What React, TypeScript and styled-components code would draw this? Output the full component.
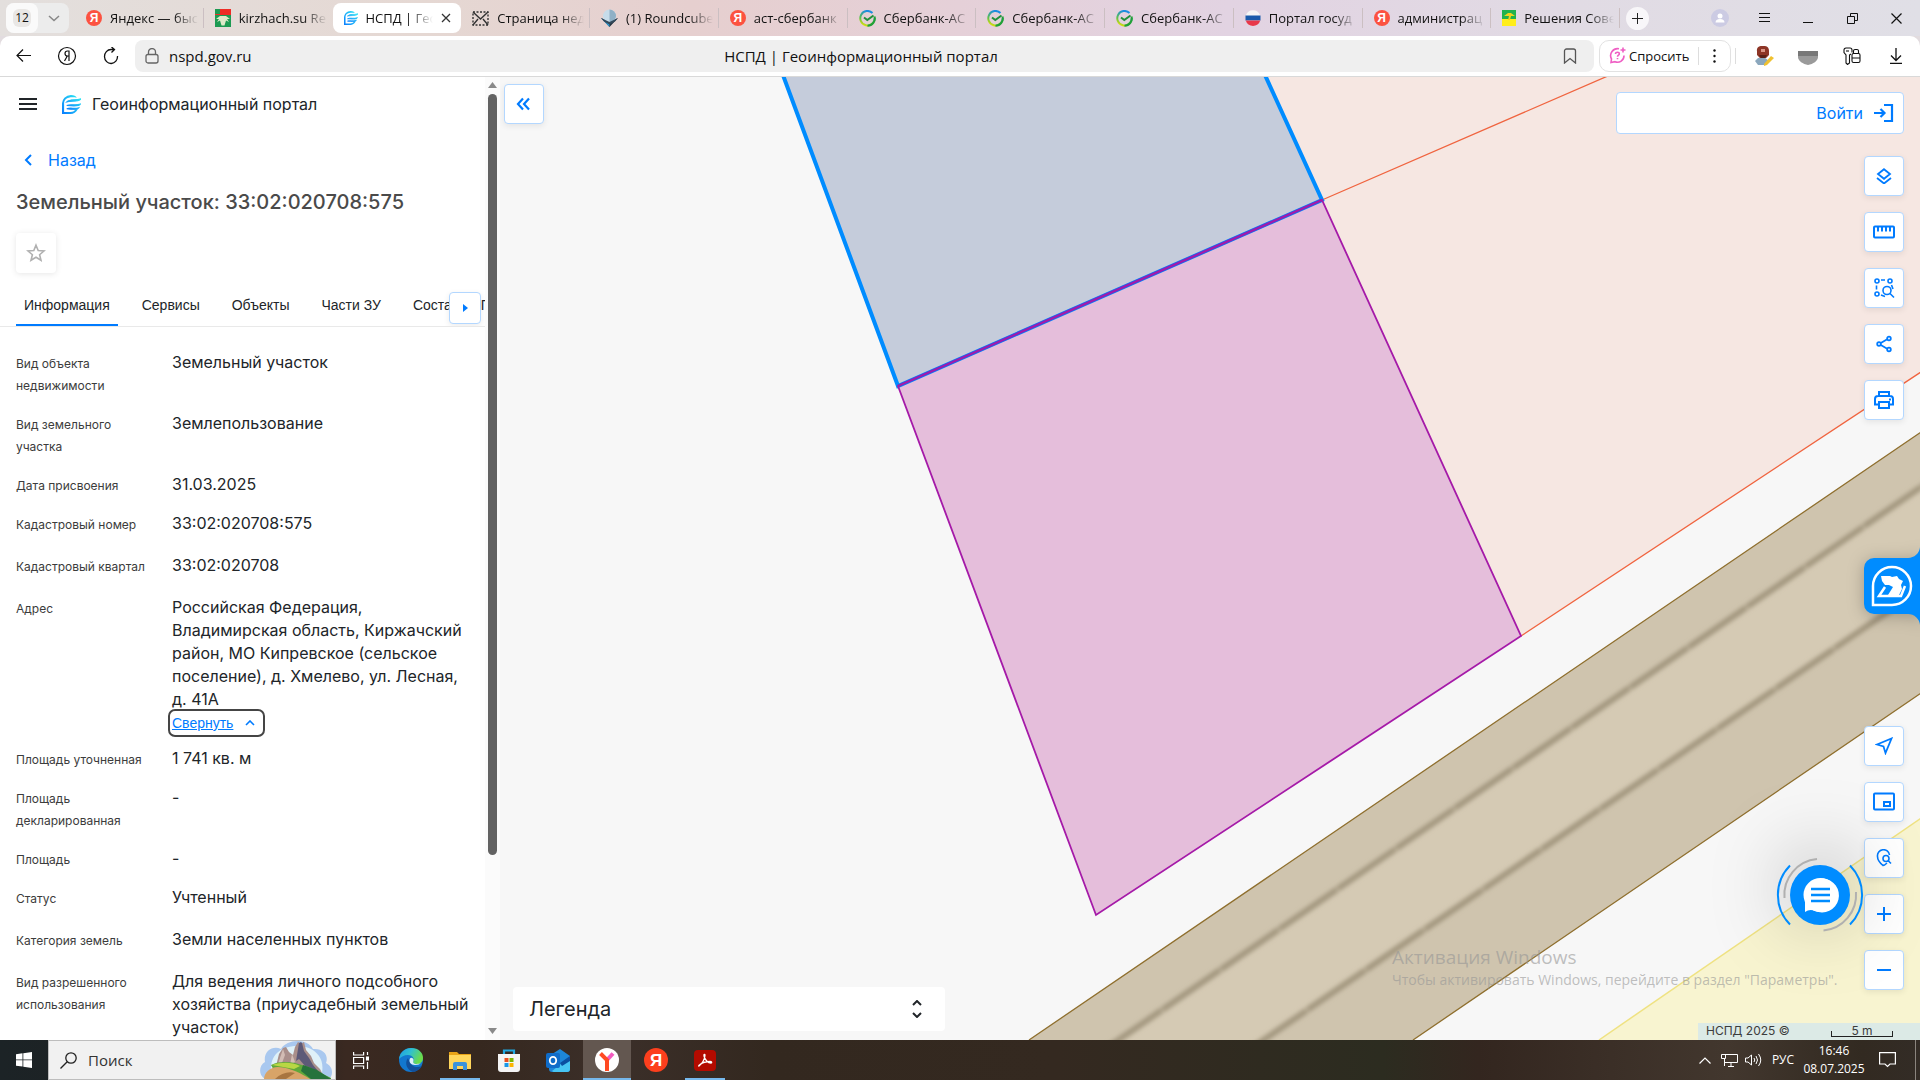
import React from "react";
import styled, { createGlobalStyle, css } from "styled-components";

const BLUE = "#007bff";
const UI = `"Open Sans", "Noto Sans", sans-serif`;

const Global = createGlobalStyle`
  *, *::before, *::after { box-sizing: border-box; }
  body { margin: 0; font-family: Inter, "Liberation Sans", sans-serif; color: #212529; }
  button { border: 0; padding: 0; background: none; font: inherit; color: inherit; cursor: pointer; }
  input { border: 0; padding: 0; background: none; font: inherit; color: inherit; outline: 0; min-width: 0; }
  svg { display: block; flex: none; }
`;

const Page = styled.div`
  height: 100vh;
  display: flex;
  flex-direction: column;
  overflow: hidden;
  background: #fff;
`;

/* ---------- browser chrome ---------- */

const TabStrip = styled.header`
  display: flex;
  align-items: center;
  height: 36px;
  padding: 0 2px 0 6px;
  font: 13px/18px ${UI};
  color: #111;
  background: linear-gradient(90deg, #e3dfdd 0%, #e5d8d3 22%, #e6cfcf 36%, #e5d0d8 50%, #e2d3e2 64%, #e1dbe4 82%, #e0dfe6 100%);
`;

const TabCounter = styled.div`
  display: flex;
  align-items: center;
  width: 63px;
  height: 30px;
  margin-right: 6px;
  border-radius: 8px;
  background: #ececec;
`;

const CountButton = styled.button`
  width: 32px;
  height: 30px;
  display: grid;
  place-items: center;
  border-radius: 8px;
  background: #fafafa;
  span { width: 18px; height: 18px; border-radius: 6px; background: #e9e7e5; font-size: 12px; color: #111; }
`;

const ChevronButton = styled.button`
  flex: 1;
  display: grid;
  place-items: center;
`;

const Tabs = styled.nav`
  display: flex;
  flex: 0 1 1545px;
  min-width: 0;
`;

const BrowserTab = styled.button<{ $active?: boolean; $line?: boolean }>`
  flex: 1 1 0;
  min-width: 0;
  height: 30px;
  display: flex;
  align-items: center;
  gap: 8px;
  padding: 0 6px 0 11px;
  border-radius: ${p => (p.$active ? "8px" : "0")};
  background: ${p => (p.$active ? "#fff" : p.$line ? "linear-gradient(#cbbfc2, #cbbfc2) right center / 1px 20px no-repeat" : "none")};
  text-align: left;
  > svg:last-child { margin-right: 4px; }
`;

const TabTitle = styled.span`
  flex: 1;
  min-width: 0;
  overflow: hidden;
  white-space: nowrap;
  mask-image: linear-gradient(90deg, #000 calc(100% - 24px), transparent);
`;

const YaBadge = styled.span<{ $size: number; $bg?: string }>`
  flex: none;
  width: ${p => p.$size}px;
  height: ${p => p.$size}px;
  border-radius: 50%;
  display: grid;
  place-items: center;
  background: ${p => p.$bg ?? "#fc5240"};
  color: #fff;
  font: 700 ${p => (p.$size > 20 ? 17 : 12)}px/1 "Liberation Sans", sans-serif;
`;

const NewTab = styled.button`
  width: 23px;
  height: 23px;
  margin-left: 6px;
  display: grid;
  place-items: center;
  border-radius: 50%;
  background: #f8f6f9;
`;

const WindowControls = styled.div`
  display: flex;
  margin-left: auto;
  button { width: 44px; height: 36px; display: grid; place-items: center; }
`;

const ToolbarBack = styled.div`
  background: #e2dcdf;
`;

const Toolbar = styled.div`
  height: 41px;
  display: flex;
  align-items: center;
  padding: 0 2px 1px 1px;
  border-bottom: 1px solid #d9d9d9;
  border-radius: 10px 10px 0 0;
  background: #fff;
  color: #111;
  font: 15px/20px ${UI};
`;

const ToolButton = styled.button`
  width: 44px;
  height: 32px;
  display: grid;
  place-items: center;
`;

const Omnibox = styled.div`
  flex: 1;
  height: 32px;
  margin-left: 2px;
  padding: 0 17px 0 10px;
  display: grid;
  grid-template-columns: 1fr auto 1fr;
  align-items: center;
  border-radius: 8px;
  background: #efefef;
  > svg:last-child { justify-self: end; }
`;

const Address = styled.label`
  display: flex;
  align-items: center;
  gap: 10px;
`;

const AskBox = styled.div`
  width: 132px;
  height: 32px;
  margin: 0 4px 0 5px;
  display: flex;
  align-items: center;
  border: 1px solid #e2e2e2;
  border-radius: 10px;
  font-size: 13px;
`;

const AskButton = styled.button`
  width: 99px;
  height: 18px;
  padding-left: 9px;
  display: flex;
  align-items: center;
  gap: 3px;
  border-right: 1px solid #ddd;
`;

const MoreButton = styled.button`
  flex: 1;
  display: grid;
  place-items: center;
`;

const ToolDivider = styled.i`
  width: 1px;
  height: 16px;
  margin-right: 6px;
  background: #ddd;
`;

/* ---------- sidebar ---------- */

const Main = styled.main`
  flex: 1;
  min-height: 0;
  display: flex;
`;

const Sidebar = styled.aside`
  flex: none;
  width: 500px;
  display: flex;
  overflow: hidden;
  background: #fff;
`;

const Panel = styled.div`
  flex: 1;
  min-width: 0;
  overflow: hidden;
`;

const PortalHead = styled.div`
  height: 54px;
  display: flex;
  align-items: center;
  padding-left: 19px;
  font-size: 16px;
  a { display: flex; align-items: center; gap: 11px; margin-left: 25px; color: inherit; text-decoration: none; }
`;

const Back = styled.a`
  display: flex;
  align-items: center;
  gap: 12px;
  margin: 17px 0 0 20px;
  height: 24px;
  color: ${BLUE};
  font-size: 16px;
  text-decoration: none;
`;

const Heading = styled.h1`
  margin: 17px 16px 18px;
  color: #4a4a4a;
  font-size: 20px;
  line-height: 26px;
  font-weight: 500;
`;

const StarButton = styled.button`
  width: 40px;
  height: 40px;
  margin: 0 16px 16px;
  display: grid;
  place-items: center;
  border-radius: 4px;
  box-shadow: 0 1px 6px rgba(0, 0, 0, 0.1);
`;

const TabBar = styled.div`
  position: relative;
  display: flex;
  gap: 16px;
  height: 38px;
  padding-left: 16px;
  border-bottom: 1px solid #e9e9e9;
  overflow: hidden;
`;

const InfoTab = styled.button<{ $active?: boolean }>`
  flex: none;
  height: 37px;
  padding: 0 8px 3px;
  font-family: "Liberation Sans", sans-serif;
  font-size: 14px;
  white-space: nowrap;
  border-bottom: 2px solid ${p => (p.$active ? BLUE : "transparent")};
`;

const framed = css`
  display: grid;
  place-items: center;
  border: 1px solid #b3d7ff;
  border-radius: 4px;
  background: #fff;
  color: ${BLUE};
  box-shadow: 0 2px 6px rgba(0, 0, 0, 0.08);
`;

const TabScroll = styled.button`
  ${framed}
  position: absolute;
  right: 4px;
  top: 3px;
  width: 32px;
  height: 32px;
`;

const Facts = styled.dl`
  margin: 0;
  padding: 24px 12px 0 16px;
`;

const Fact = styled.div<{ $gap: number }>`
  display: grid;
  grid-template-columns: 140px 1fr;
  column-gap: 16px;
  align-items: baseline;
  margin-bottom: ${p => p.$gap}px;
  dt { font-size: 12px; line-height: 22px; color: #3c3c3c; }
  dd { margin: 0; font-size: 16px; line-height: 23px; }
`;

const Collapse = styled.button`
  display: flex;
  align-items: center;
  gap: 12px;
  height: 28px;
  margin: -2px 0 -5px -4px;
  padding: 0 8px 0 2px;
  border: 2px solid #454545;
  border-radius: 7px;
  color: ${BLUE};
  font-family: "Liberation Sans", sans-serif;
  font-size: 14px;
  span { text-decoration: underline; }
`;

const ScrollTrack = styled.div`
  width: 15px;
  display: flex;
  flex-direction: column;
  align-items: center;
  gap: 6px;
  padding: 5px 0 6px;
  background: #fbfbfb;
`;

const ScrollThumb = styled.div`
  flex: 761;
  width: 9px;
  border-radius: 5px;
  background: #636363;
`;

const ScrollRest = styled.div`
  flex: 161;
`;

/* ---------- map ---------- */

const MapArea = styled.section`
  position: relative;
  flex: 1;
  min-width: 0;
  overflow: hidden;
  background: #f7f7f7;
`;

const MapCanvas = styled.svg`
  position: absolute;
  inset: 0;
  width: 100%;
  height: 100%;
`;

const MapButton = styled.button`
  ${framed}
  width: 40px;
  height: 40px;
`;

const CornerLeft = styled.div`
  position: absolute;
  left: 4px;
  top: 7px;
`;

const LoginBar = styled.div`
  position: absolute;
  right: 16px;
  top: 15px;
  width: 288px;
  height: 42px;
  display: flex;
  justify-content: flex-end;
  align-items: center;
  padding-right: 9px;
  border: 1px solid #b3d7ff;
  border-radius: 4px;
  background: #fff;
  a { display: flex; align-items: center; gap: 9px; color: ${BLUE}; font-size: 16px; text-decoration: none; }
`;

const Stack = styled.div<{ $top?: number; $bottom?: number }>`
  position: absolute;
  right: 16px;
  ${p => (p.$top !== undefined ? `top: ${p.$top}px;` : `bottom: ${p.$bottom}px;`)}
  display: flex;
  flex-direction: column;
  gap: 16px;
`;

const Support = styled.button`
  position: absolute;
  right: 0;
  top: 468px;
  filter: drop-shadow(0 2px 8px rgba(0, 0, 0, 0.25));
`;

const ChatButton = styled.button`
  position: absolute;
  right: 70px;
  bottom: 115px;
  width: 60px;
  height: 60px;
  border-radius: 50%;
  background: #008cff;
  box-shadow: 0 -8px 80px rgba(0, 0, 0, 0.36);
  svg { margin: -15px; }
`;

const Legend = styled.button`
  position: absolute;
  left: 13px;
  bottom: 9px;
  width: 432px;
  height: 44px;
  display: flex;
  justify-content: space-between;
  align-items: center;
  padding: 0 23px 0 16px;
  border-radius: 4px;
  background: #fff;
  font-size: 20px;
`;

const Attribution = styled.footer`
  position: absolute;
  right: 0;
  bottom: 0;
  width: 222px;
  height: 17px;
  display: flex;
  justify-content: space-between;
  padding: 0 27px 0 8px;
  background: #dceae6;
  color: #3c3c3c;
  font-size: 12px;
  line-height: 16px;
`;

const Scale = styled.span`
  width: 62px;
  height: 14px;
  text-align: center;
  background:
    linear-gradient(#222, #222) left bottom / 1px 6px no-repeat,
    linear-gradient(#222, #222) right bottom / 1px 6px no-repeat,
    linear-gradient(#222, #222) bottom / 100% 1px no-repeat;
`;

const Watermark = styled.div`
  position: absolute;
  right: 73px;
  bottom: 50px;
  width: 455px;
  color: rgba(150, 150, 150, 0.6);
  font: 14px/20px ${UI};
  white-space: nowrap;
  pointer-events: none;
  strong { display: block; font-weight: 400; font-size: 19px; line-height: 26px; }
`;

/* ---------- taskbar ---------- */

const Taskbar = styled.footer`
  flex: none;
  height: 40px;
  display: flex;
  align-items: stretch;
  color: #fff;
  font: 12px/18px ${UI};
  background: linear-gradient(90deg, #1c2326 0%, #1e2020 14%, #3a2921 18%, #36281f 25%, #3b2f29 32%, #33281f 40%, #342920 55%, #2c2c20 72%, #33261f 77%, #42372e 90%, #322a21 97%, #332c26 100%);
`;

const StartButton = styled.button`
  width: 48px;
  display: grid;
  place-items: center;
`;

const SearchBox = styled.label`
  width: 288px;
  display: flex;
  align-items: center;
  gap: 11px;
  padding-left: 11px;
  border: 1px solid #bdbdbd;
  background: #f1f1f1;
  color: #333;
  font-size: 15px;
  input { flex: 1; }
  input::placeholder { color: #333; opacity: 1; }
`;

const Apps = styled.div`
  display: flex;
  gap: 1px;
  > :first-child { width: 50px; }
`;

const AppButton = styled.button<{ $open?: boolean; $active?: boolean }>`
  width: 48px;
  display: grid;
  place-items: center;
  background:
    ${p => (p.$open || p.$active ? `linear-gradient(#76b9ed, #76b9ed) center bottom / ${p.$active ? 48 : 40}px 2px no-repeat,` : "")}
    ${p => (p.$active ? "#635750" : "transparent")};
`;

const Tray = styled.div`
  margin-left: auto;
  display: flex;
  align-items: center;
  text-align: center;
`;

const TrayButton = styled.button<{ $w: number }>`
  width: ${p => p.$w}px;
  height: 40px;
  display: grid;
  place-items: center;
`;

const ShowDesktop = styled.button`
  width: 5px;
  height: 40px;
  margin-left: 8px;
  border-left: 1px solid #8a847e;
`;

/* ---------- icons ---------- */

type IconProps = { size?: number; w?: number; box?: number; children: React.ReactNode };
const Icon = ({ size = 24, w = 2, box = 24, children }: IconProps) => (
  <svg width={size} height={size} viewBox={`0 0 ${box} ${box}`} fill="none" stroke="currentColor" strokeWidth={w} aria-hidden="true">
    {children}
  </svg>
);

const Arms = () => (
  <svg width="16" height="19" viewBox="0 0 16 19">
    <path d="M0 0h16v18H0z" fill="#1d9a52" />
    <path d="M0 0h16v6H0z" fill="#ee2c25" />
    <path d="M0 0h5v5H0z" fill="#1d9a52" />
    <path d="M1 10l4-3 3 0 3 0 4 3-3 0 2 3-3-1.500-1.500 5h-3L5 11.500 2 13l2-3z" fill="#dfe9c9" />
  </svg>
);

const Portal = ({ size }: { size: number }) => (
  <svg width={size} height={size} viewBox="0 0 18 18">
    <defs>
      <linearGradient id="pg" x1="0" y1="1" x2="1" y2="0">
        <stop offset="0" stopColor="#0a7bff" />
        <stop offset="1" stopColor="#2be8f2" />
      </linearGradient>
    </defs>
    <path d="M0 18V9a8.500 8.500 0 0 1 8.500-9c3 0 4.500 1 5.500 2.500-4-.500-8-.500-10.500 1.500C2 5.500 2 7 2 9v7h6c2.500 0 4-1 5-2.500h2C13.500 16.500 11 18 8 18z" fill="url(#pg)" />
    <path d="M4.500 6.500C8 3 12 5.500 18 3.500 17 6.500 9 5.500 4.500 6.500zM4.500 10c4-2 8 .500 13-1.500-1.500 3-8 1.500-13 1.500zM4.500 13c4-1.500 7 .500 11.500-1-1.500 2.500-7 1.500-11.500 1z" fill="url(#pg)" stroke="url(#pg)" />
  </svg>
);

const Envelope = () => (
  <svg width="17" height="15" viewBox="0 0 17 15" fill="none" stroke="#333" strokeWidth="1.400">
    <path d="M1 1h15v13H1z" strokeDasharray="2 1.500" />
    <path d="M1 1l7.500 7L16 1M1 14l5-6M16 14l-5-6" />
  </svg>
);

const Roundcube = () => (
  <svg width="17" height="18" viewBox="0 0 17 18">
    <path d="M0 9l8.500 4L17 9l-8.500 9z" fill="#22323f" />
    <path d="M0 9l8.500 4.500V18z" fill="#2d9ad4" />
    <circle cx="8.500" cy="7" r="6.500" fill="#c6dcea" />
    <path d="M8.500.500a6.500 6.500 0 0 1 0 13z" fill="#8fb0c6" />
    <path d="M0 9l8.500 4L17 9l-3 3.500-5.500 3-5.500-3z" fill="#33495a" />
  </svg>
);

const Sber = () => (
  <svg width="17" height="17" viewBox="0 0 17 17" fill="none">
    <defs>
      <linearGradient id="sb" x1="0" y1="1" x2="0.400" y2="0">
        <stop offset="0" stopColor="#f3e500" />
        <stop offset="0.450" stopColor="#5fc24a" />
        <stop offset="1" stopColor="#1b8de0" />
      </linearGradient>
    </defs>
    <path d="M13.500 3A7.200 7.200 0 1 0 15.700 8" stroke="url(#sb)" strokeWidth="2" />
    <path d="M15.500 6.500a7.200 7.200 0 0 1-7 9.200" stroke="#21a038" strokeWidth="2" />
    <path d="M5 7.500l3.300 2.500L14.500 5.500" stroke="#21903a" strokeWidth="2" />
  </svg>
);

const Gos = () => (
  <svg width="16" height="16" viewBox="0 0 16 16">
    <path d="M1 5a7.500 7.500 0 0 1 14 0v6a8 8 0 0 1-7 5 8 8 0 0 1-7-5z" fill="#f5f5f5" />
    <path d="M.5 5.500h15v5H.500z" fill="#1a5aab" />
    <path d="M.7 10.500h14.600A8 8 0 0 1 8 16a8 8 0 0 1-7.300-5.500z" fill="#e8384a" />
  </svg>
);

const Council = () => (
  <svg width="14" height="16" viewBox="0 0 14 16">
    <path d="M0 0h14v9H0z" fill="#20b24d" />
    <path d="M0 9h14v7H0z" fill="#ffee1a" />
    <path d="M2 6l4-3 3 0 4 3-4 0-1 4H6l1-4z" fill="#f1d21d" />
  </svg>
);

const Ya = () => <YaBadge $size={16}>Я</YaBadge>;

type TabInfo = { icon: React.ReactNode; title: string; active?: boolean; line?: boolean };
const TABS: TabInfo[] = [
  { icon: <Ya />, title: "Яндекс — быс", line: true },
  { icon: <Arms />, title: "kirzhach.su Re" },
  { icon: <Portal size={14} />, title: "НСПД | Гео", active: true },
  { icon: <Envelope />, title: "Страница нед", line: true },
  { icon: <Roundcube />, title: "(1) Roundcube", line: true },
  { icon: <Ya />, title: "аст-сбербанк", line: true },
  { icon: <Sber />, title: "Сбербанк-АС", line: true },
  { icon: <Sber />, title: "Сбербанк-АС", line: true },
  { icon: <Sber />, title: "Сбербанк-АС", line: true },
  { icon: <Gos />, title: "Портал госуд", line: true },
  { icon: <Ya />, title: "администрац", line: true },
  { icon: <Council />, title: "Решения Сове", line: true },
];

type FactInfo = { label: string; value: string; gap: number; collapsible?: boolean };
const FACTS: FactInfo[] = [
  { label: "Вид объекта недвижимости", value: "Земельный участок", gap: 15 },
  { label: "Вид земельного участка", value: "Землепользование", gap: 15 },
  { label: "Дата присвоения", value: "31.03.2025", gap: 15 },
  { label: "Кадастровый номер", value: "33:02:020708:575", gap: 18 },
  { label: "Кадастровый квартал", value: "33:02:020708", gap: 18 },
  {
    label: "Адрес",
    value: "Российская Федерация, Владимирская область, Киржачский район, МО Кипревское (сельское поселение), д. Хмелево, ул. Лесная, д. 41А",
    gap: 15,
    collapsible: true,
  },
  { label: "Площадь уточненная", value: "1 741 кв. м", gap: 15 },
  { label: "Площадь декларированная", value: "-", gap: 15 },
  { label: "Площадь", value: "-", gap: 15 },
  { label: "Статус", value: "Учтенный", gap: 18 },
  { label: "Категория земель", value: "Земли населенных пунктов", gap: 18 },
  { label: "Вид разрешенного использования", value: "Для ведения личного подсобного хозяйства (приусадебный земельный участок)", gap: 18 },
];

const BrowserChrome = () => (
  <>
    <TabStrip>
      <TabCounter>
        <CountButton><span>12</span></CountButton>
        <ChevronButton aria-label="Список вкладок">
          <svg width="12" height="7" viewBox="0 0 12 7" fill="none" stroke="#888" strokeWidth="1.500"><path d="M1 1l5 4.500L11 1" /></svg>
        </ChevronButton>
      </TabCounter>
      <Tabs>
        {TABS.map((t, i) => (
          <BrowserTab key={i} $active={t.active} $line={t.line}>
            {t.icon}
            <TabTitle>{t.title}</TabTitle>
            {t.active && <svg width="10" height="10" viewBox="0 0 10 10" stroke="#333" strokeWidth="1.300"><path d="M1 1l8 8M9 1L1 9" /></svg>}
          </BrowserTab>
        ))}
      </Tabs>
      <NewTab aria-label="Новая вкладка">
        <svg width="11" height="11" viewBox="0 0 11 11" stroke="#222"><path d="M5.500 0v11M0 5.500h11" /></svg>
      </NewTab>
      <WindowControls>
        <button aria-label="Профиль">
          <svg width="18" height="18" viewBox="0 0 18 18"><circle cx="9" cy="9" r="9" fill="#cccbe3" /><circle cx="9" cy="7" r="2.500" fill="#fff" /><path d="M4.500 13.500a4.500 3.500 0 0 1 9 0z" fill="#fff" /></svg>
        </button>
        <button aria-label="Меню"><svg width="11" height="10" viewBox="0 0 11 10" stroke="#111"><path d="M0 .5h11M0 4.500h11M0 8.500h11" /></svg></button>
        <button aria-label="Свернуть окно"><svg width="10" height="10" viewBox="0 0 10 10" stroke="#111"><path d="M0 9.500h10" /></svg></button>
        <button aria-label="Восстановить"><svg width="11" height="11" viewBox="0 0 11 11" fill="none" stroke="#111"><path d="M.5 3.500h7v7h-7zM3.500 3V.500h7v7H8" /></svg></button>
        <button aria-label="Закрыть"><svg width="11" height="11" viewBox="0 0 11 11" stroke="#111" strokeWidth="1.200"><path d="M.5.500l10 10M10.500.500l-10 10" /></svg></button>
      </WindowControls>
    </TabStrip>
    <ToolbarBack>
      <Toolbar>
        <ToolButton aria-label="Назад"><svg width="15" height="13" viewBox="0 0 15 13" fill="none" stroke="#111" strokeWidth="1.200"><path d="M15 6.500H1M7 .500l-6 6 6 6" /></svg></ToolButton>
        <ToolButton aria-label="Яндекс">
          <svg width="20" height="20" viewBox="0 0 20 20" fill="none" stroke="#111" strokeWidth="1.200"><circle cx="10" cy="10" r="8.500" /><path d="M12 15V5h-1.500C8.800 5 8 6 8 7.500S9 10 10.500 10H12M10.300 10L7.500 15" /></svg>
        </ToolButton>
        <ToolButton aria-label="Обновить"><svg width="16" height="18" viewBox="0 0 16 18" fill="none" stroke="#111" strokeWidth="1.300"><path d="M14.500 9a6.500 7 0 1 1-6.500-6.500h3M8.500 0l3 2.500-3 3" /></svg></ToolButton>
        <Omnibox>
          <Address>
            <svg width="14" height="16" viewBox="0 0 14 16" fill="none" stroke="#666" strokeWidth="1.300"><rect x="1" y="6.500" width="12" height="8.500" rx="2" /><path d="M3.500 6.500V4a3.500 3.500 0 0 1 7 0v2.500" /></svg>
            <input aria-label="Адресная строка" defaultValue="nspd.gov.ru" />
          </Address>
          <span>НСПД | Геоинформационный портал</span>
          <svg width="14" height="16" viewBox="0 0 14 16" fill="none" stroke="#555" strokeWidth="1.300"><path d="M1.500 15V3a2 2 0 0 1 2-2h7a2 2 0 0 1 2 2v12L7 10.500z" /></svg>
        </Omnibox>
        <AskBox>
          <AskButton>
            <svg width="17" height="17" viewBox="0 0 17 17" fill="none" stroke="#ef5fc4" strokeWidth="1.600">
              <path d="M10 1.800A7 7 0 0 0 2.500 12L2 15.500l4-.800a6.500 6.500 0 0 0 9-6.200" />
              <path d="M6.500 7c0-2.500 4-2.200 3.800 0-.1 1.300-1.800 1.200-1.800 2.800M8.500 11v1.300M14 .500v5M11.500 3h5" />
            </svg>
            Спросить
          </AskButton>
          <MoreButton aria-label="Ещё"><svg width="3" height="14" viewBox="0 0 3 14" fill="#111"><circle cx="1.500" cy="1.500" r="1.200" /><circle cx="1.500" cy="7" r="1.200" /><circle cx="1.500" cy="12.500" r="1.200" /></svg></MoreButton>
        </AskBox>
        <ToolDivider />
        <ToolButton aria-label="Расширение">
          <svg width="20" height="20" viewBox="0 0 20 20">
            <path d="M1 15l3-3 6-1 5 4-3 4-8 0z" fill="#8ba7bd" />
            <path d="M3 5a4 4 0 0 1 4-5h4a5 5 0 0 1 4 5v4l-3 3H6L3 9z" fill="#8d3526" />
            <path d="M5 9h8l-2 3H7z" fill="#5a2118" /><path d="M7 3h4v3H7z" fill="#d99485" />
            <path d="M10 18l7-8 3 2-7 7-3 1z" fill="#f0c12f" />
          </svg>
        </ToolButton>
        <ToolButton aria-label="Защита">
          <svg width="20" height="19" viewBox="0 0 20 19"><path d="M0 5h20v6c0 4-5 7-10 8C5 18 0 15 0 11z" fill="#9a9a9a" /><path d="M0 5h20v5H0z" fill="#787878" /></svg>
        </ToolButton>
        <ToolButton aria-label="Пароли">
          <svg width="18" height="18" viewBox="0 0 18 18" fill="none" stroke="#111" strokeWidth="1.100"><path d="M9 5.500V3a2 2 0 0 0-2-2H3a2 2 0 0 0-2 2v2.500L3 8v8l1.500 1.500L6.500 16V8L8 7" /><path d="M3 4h3" /><rect x="9" y="6.500" width="8" height="9" rx="1.500" /><path d="M10.500 6.500V4A1.500 1.500 0 0 1 12 2.500h2A1.500 1.500 0 0 1 15.500 4v2.500M9 11h8" /></svg>
        </ToolButton>
        <ToolButton aria-label="Загрузки"><svg width="14" height="16" viewBox="0 0 14 16" fill="none" stroke="#111" strokeWidth="1.300"><path d="M7 0v12M2 7.500l5 5 5-5M1 15.300h12" /></svg></ToolButton>
      </Toolbar>
    </ToolbarBack>
  </>
);

const ParcelPanel = () => (
  <Sidebar>
    <Panel>
      <PortalHead>
        <button aria-label="Меню"><svg width="18" height="12" viewBox="0 0 18 12" fill="#212529"><path d="M0 0h18v2H0zM0 5h18v2H0zM0 10h18v2H0z" /></svg></button>
        <a href="#home"><Portal size={19} />Геоинформационный портал</a>
      </PortalHead>
      <Back href="#back">
        <svg width="16" height="16" viewBox="0 0 16 16" fill="none" stroke="currentColor" strokeWidth="2"><path d="M11 3L6 8l5 5" /></svg>
        Назад
      </Back>
      <Heading>Земельный участок: 33:02:020708:575</Heading>
      <StarButton aria-label="В избранное">
        <svg width="20" height="20" viewBox="0 0 20 20" fill="none" stroke="#b0b0b0" strokeWidth="1.600"><path d="M10 2.200l2.200 5.300 5.800.500-4.400 3.700 1.400 5.600-5-3-5 3 1.400-5.600L2 8l5.800-.500z" /></svg>
      </StarButton>
      <TabBar>
        <InfoTab $active>Информация</InfoTab>
        <InfoTab>Сервисы</InfoTab>
        <InfoTab>Объекты</InfoTab>
        <InfoTab>Части ЗУ</InfoTab>
        <InfoTab>Состав ЕЗП</InfoTab>
        <TabScroll aria-label="Дальше"><svg width="5" height="8" viewBox="0 0 5 8" fill={BLUE}><path d="M0 0l5 4-5 4z" /></svg></TabScroll>
      </TabBar>
      <Facts>
        {FACTS.map(f => (
          <Fact key={f.label} $gap={f.gap}>
            <dt>{f.label}</dt>
            <dd>
              {f.value}
              {f.collapsible && (
                <Collapse>
                  <span>Свернуть</span>
                  <svg width="10" height="6" viewBox="0 0 10 6" fill="none" stroke="currentColor" strokeWidth="1.600"><path d="M1 5l4-4 4 4" /></svg>
                </Collapse>
              )}
            </dd>
          </Fact>
        ))}
      </Facts>
    </Panel>
    <ScrollTrack>
      <svg width="9" height="6" viewBox="0 0 9 6" fill="#8a8a8a"><path d="M0 6l4.500-6L9 6z" /></svg>
      <ScrollThumb />
      <ScrollRest />
      <svg width="9" height="6" viewBox="0 0 9 6" fill="#8a8a8a"><path d="M0 0l4.500 6L9 0z" /></svg>
    </ScrollTrack>
  </Sidebar>
);

const MapView = () => (
  <MapArea>
    <MapCanvas viewBox="500 77 1420 963" preserveAspectRatio="xMaxYMin slice">
      <defs><filter id="soft" x="-5%" y="-5%" width="110%" height="110%"><feGaussianBlur stdDeviation="2" /></filter></defs>
      <path d="M1250 40H1930V366L1521 636 1322 200z" fill="#f6e7e2" />
      <path d="M1322 200L1700 36M1521 636L1930 366" stroke="#f0643f" strokeWidth="1.300" />
      <path d="M1029 1040L1930 426V687L1413 1040z" fill="#cfc4ae" />
      <path d="M1118 1040L1930 481V583L1264 1040z" fill="#d5cab4" />
      <path d="M1104 1050L1940 474M1249 1050L1940 576" stroke="#a3977f" strokeWidth="6" strokeDasharray="70 1" filter="url(#soft)" />
      <path d="M1029 1040L1930 426M1413 1040L1930 687" stroke="#8f6f2e" strokeWidth="1.300" />
      <path d="M1599 1040L1930 812V1040z" fill="#f8f4d0" />
      <path d="M1599 1040L1930 812" stroke="#efe282" strokeWidth="1.500" />
      <path d="M770 40L898 386 1322 200 1249 40z" fill="#c5ccdb" />
      <path d="M898 386L1322 200 1521 636 1096 915z" fill="#e5bedb" />
      <path d="M770 40L898 386 1322 200 1249 40" fill="none" stroke="#008cff" strokeWidth="4" />
      <path d="M898 386L1322 200" stroke="#5a3ad0" strokeWidth="3" />
      <path d="M898 386L1322 200 1521 636 1096 915z" fill="none" stroke="#a51aa8" strokeWidth="1.800" />
    </MapCanvas>
    <CornerLeft>
      <MapButton aria-label="Скрыть панель"><Icon size={20} box={20} w={2.2}><path d="M9 4.500L4 10l5 5.500M15 4.500L10 10l5 5.500" /></Icon></MapButton>
    </CornerLeft>
    <LoginBar>
      <a href="#login">Войти
        <Icon size={22} box={22} w={2.2}><path d="M2 11h10M8.500 7l4 4-4 4M12 3h8v16h-8" /></Icon>
      </a>
    </LoginBar>
    <Stack $top={79}>
      <MapButton aria-label="Слои"><Icon size={16} box={16} w={1.8}><path d="M8 1.200l6 4.800-6 4.800L2 6zM1 10l7 5.500L15 10" /></Icon></MapButton>
      <MapButton aria-label="Линейка"><Icon size={22} box={22} w={2}><rect x="1" y="5.500" width="20" height="11" rx="1" /><path d="M5 6v4.500M9 6v4.500M13 6v4.500M17 6v4.500" /></Icon></MapButton>
      <MapButton aria-label="Поиск по области">
        <Icon size={22} box={22} w={1.6}>
          <circle cx="4" cy="4" r="2" /><circle cx="17" cy="4" r="2" /><circle cx="4" cy="17" r="2" /><circle cx="14" cy="13.500" r="4" />
          <path d="M8 3h4M3.500 8.500v4M17 16.500l4 4M18.500 8l1.500 4" /><path d="M8 18l4 1.500" />
        </Icon>
      </MapButton>
      <MapButton aria-label="Поделиться"><Icon size={18} box={18} w={1.8}><circle cx="4" cy="9" r="1.800" /><circle cx="14" cy="3.500" r="1.800" /><circle cx="14" cy="14.500" r="1.800" /><path d="M5.800 8L12.200 4.300M5.800 10l6.400 3.700" /></Icon></MapButton>
      <MapButton aria-label="Печать"><Icon size={20} box={20} w={2}><path d="M5 6V2h10v4M5 14.500H1V9a3 3 0 0 1 3-3h12a3 3 0 0 1 3 3v5.500h-4M5 12h10v6H5zM15 9.500h2" /></Icon></MapButton>
    </Stack>
    <Stack $bottom={50}>
      <MapButton aria-label="Моё местоположение"><Icon size={18} box={18} w={1.8}><path d="M2 7.500L16.500 1.500 10.500 16 8.500 9.500z" /></Icon></MapButton>
      <MapButton aria-label="Обзорная карта"><Icon size={22} box={22} w={2}><rect x="1" y="2.500" width="20" height="16" rx="1" /><path d="M11 11h6v4h-6z" /></Icon></MapButton>
      <MapButton aria-label="Поиск по точке">
        <Icon size={18} box={18} w={1.6}><path d="M9 15.800l-1 .7C5 14 2.500 11 2.500 7.500A6 6 0 0 1 14.500 6" /><circle cx="11" cy="9.500" r="3" /><path d="M13 11.500l3 3M9 16.500l3-2.500" /></Icon>
      </MapButton>
      <MapButton aria-label="Приблизить"><Icon size={14} box={14} w={2}><path d="M7 0v14M0 7h14" /></Icon></MapButton>
      <MapButton aria-label="Отдалить"><Icon size={14} box={14} w={2}><path d="M0 7h14" /></Icon></MapButton>
    </Stack>
    <Support aria-label="Помощник">
      <svg width="56" height="82" viewBox="0 0 56 82">
        <path d="M10 69a10 10 0 0 1-10-10V23a10 10 0 0 1 10-10h34a12 12 0 0 0 12-11v78a12 12 0 0 0-12-11z" fill="#008cff" />
        <path d="M9 60V41a19 19 0 1 1 19 19H9z" fill="none" stroke="#fff" strokeWidth="2.500" />
        <path d="M17 31h9l2 1 5-1 2 3 4 2-2 4 1 4-3 6H24l5-8-4-2-4 0-3-4z" fill="#fff" />
        <path d="M21 42l-6 9h22l4-10" fill="none" stroke="#fff" strokeWidth="2.500" />
      </svg>
    </Support>
    <Watermark><strong>Активация Windows</strong>Чтобы активировать Windows, перейдите в раздел "Параметры".</Watermark>
    <ChatButton aria-label="Чат">
      <svg width="90" height="90" viewBox="0 0 90 90" fill="none">
        <path d="M15 15.500A42 42 0 0 0 15 74.500M75 15.500a42 42 0 0 1 0 59" stroke="#008cff" strokeWidth="2" />
        <path d="M9.500 48A36 36 0 0 1 42 9M81 42A36 36 0 0 1 48.500 80.500" stroke="#b0b0b0" strokeWidth="2" />
        <path d="M30 62V47a17 17 0 1 1 10 14c-4-2-7-1-10 1z" fill="#fff" />
        <circle cx="45.500" cy="45" r="17" fill="#fff" />
        <path d="M36 39h19M36 45h19M36 51h19" stroke="#008cff" strokeWidth="2.500" />
      </svg>
    </ChatButton>
    <Legend>
      Легенда
      <svg width="10" height="18" viewBox="0 0 10 18" fill="none" stroke="#212529" strokeWidth="2"><path d="M1 5l4-4 4 4M1 13l4 4 4-4" /></svg>
    </Legend>
    <Attribution><span>НСПД 2025 ©</span><Scale>5 m</Scale></Attribution>
  </MapArea>
);

const WinTaskbar = () => (
  <Taskbar>
    <StartButton aria-label="Пуск"><svg width="16" height="16" viewBox="0 0 16 16" fill="#fff"><path d="M0 2.200l6.500-.9v6.200H0zM7.300 1.200L16 0v7.500H7.300zM0 8.300h6.500v6.300L0 13.700zM7.300 8.300H16V16l-8.700-1.200z" /></svg></StartButton>
    <SearchBox>
      <svg width="17" height="17" viewBox="0 0 17 17" fill="none" stroke="#222" strokeWidth="1.300"><circle cx="11" cy="6" r="5.200" /><path d="M7.200 9.800L.500 16.500" /></svg>
      <input aria-label="Поиск" placeholder="Поиск" />
      <svg width="76" height="38" viewBox="0 0 76 38">
        <path d="M6 38C-1 34 0 24 6 21 4 10 14 4 22 8c6-10 26-11 32 0 10-1 16 6 13 14 8 4 7 13 3 16z" fill="#a9c8ef" />
        <path d="M12 32C10 14 22 5 38 5s28 10 25 27z" fill="#dff1f8" />
        <path d="M17 25l3-12 4-6 3-1 3 5 4 3 2-8 3-5 3 2 3-2 2 8 5 6 3 7 6 6 4 8H18z" fill="#a98f8b" />
        <path d="M40 2l2-1 1 1 2 8 5 7 4 7 5 6-12-4-7-8-3 2z" fill="#5d5a78" />
        <path d="M24 8l2 6-3 8-4 1zM33 13l3 8-5 3z" fill="#d2bcb4" />
        <path d="M12 24c9-4 16-3 24-2l14 4 22 11v1H20z" fill="#5fa83a" />
        <path d="M13 24c9-3 20-3 28 1l-6 3z" fill="#b9d644" />
        <path d="M44 24l14 5 14 9H52l-10-8z" fill="#26733c" />
        <path d="M5 38c0-6 6-12 14-12 14 1 24 7 32 12z" fill="#d8a468" />
        <path d="M16 38c6-6 14-8 20-6l-9 6z" fill="#a87540" />
      </svg>
    </SearchBox>
    <Apps>
      <AppButton aria-label="Представление задач"><svg width="16" height="17" viewBox="0 0 16 17" fill="none" stroke="#fff" strokeWidth="1.200"><path d="M.6 0v3h10V0M.600 17v-3h10v3M.600 5.500h10v6H.600zM14.500 0v3M14.500 10v7" /><path d="M13.500 5h2v3h-2z" fill="#fff" /></svg></AppButton>
      <AppButton aria-label="Edge">
        <svg width="24" height="24" viewBox="0 0 24 24">
          <defs>
            <linearGradient id="eg" x1="0" y1="0" x2="1" y2="0.400"><stop offset="0" stopColor="#1c9be6" /><stop offset="0.500" stopColor="#30c0d0" /><stop offset="1" stopColor="#6bdc4a" /></linearGradient>
          </defs>
          <circle cx="12" cy="12" r="12" fill="#1277cf" />
          <path d="M0 11C1 4 6 0 12 0c8 0 12 5 12 10 0 4-3 6-6 6-3 0-4-1-4-2 2-3 0-7-5-7-4 0-7 2-9 4z" fill="url(#eg)" />
          <path d="M9 10c-4 5-1 12 5 14 4-.500 7-3 9-6-3 1.500-7 1.500-9.500-.500S10 12.500 9 10z" fill="#11509c" />
          <path d="M11 10.500c-1.500 3 .500 6.500 5 6.500 3 0 5-1 6-2-2 1-6 1.500-7.500 0-.800-1 .200-1.800 0-3.500-.500-1.500-2.500-2.500-3.500-1z" fill="#dceefa" />
        </svg>
      </AppButton>
      <AppButton $open aria-label="Проводник"><svg width="22" height="19" viewBox="0 0 22 19"><path d="M0 1h8l2 2h12v15H0z" fill="#e8a317" /><path d="M0 4h22v14H0z" fill="#ffd65c" /><path d="M4 19v-6a2 2 0 0 1 2-2h10a2 2 0 0 1 2 2v6h-4v-4H8v4z" fill="#3b93dc" /></svg></AppButton>
      <AppButton aria-label="Store"><svg width="22" height="23" viewBox="0 0 22 23"><path d="M6 6V1.500h10V6" fill="none" stroke="#21a7e0" strokeWidth="2.200" /><path d="M0 5h22v15a3 3 0 0 1-3 3H3a3 3 0 0 1-3-3z" fill="#f4f4f4" /><path d="M6.500 9h4v4h-4z" fill="#e8501f" /><path d="M11.500 9h4v4h-4z" fill="#7db700" /><path d="M6.500 14h4v4h-4z" fill="#1996e6" /><path d="M11.500 14h4v4h-4z" fill="#fbb400" /></svg></AppButton>
      <AppButton aria-label="Outlook"><svg width="24" height="23" viewBox="0 0 24 23"><path d="M3 7l11-7 10 7v13a3 3 0 0 1-3 3H6a3 3 0 0 1-3-3z" fill="#1d86d8" /><path d="M24 8L6 22c1 1 2 1 3 1h12a3 3 0 0 0 3-3z" fill="#47c5f3" /><path d="M14 14l10-7v5l-8 5z" fill="#0a4ea0" /><rect y="4" width="14" height="15" rx="2" fill="#0f6cc9" /><ellipse cx="7" cy="11.500" rx="3.200" ry="3.700" fill="none" stroke="#fff" strokeWidth="1.800" /></svg></AppButton>
      <AppButton $active aria-label="Яндекс Браузер"><svg width="24" height="24" viewBox="0 0 24 24" fill="none" strokeWidth="4"><circle cx="12" cy="12" r="12" fill="#fff" /><path d="M12 12l6-6.500" stroke="#f35bc0" /><path d="M5.500 5.500L12 12v11" stroke="#ff4a23" /></svg></AppButton>
      <AppButton aria-label="Яндекс"><YaBadge $size={24} $bg="#fc3f1d">Я</YaBadge></AppButton>
      <AppButton $open aria-label="Acrobat"><svg width="22" height="21" viewBox="0 0 22 21"><rect width="22" height="21" rx="4" fill="#b30b00" /><path d="M5 16c3-2 6-7 6-11 0-1-1.500-1-1 1 .8 4 4 7 7 7 1 0 1-1.500-1-1.500-4 0-8 1.500-10 3-1.500 1-1.500 1.800-1 1.500z" fill="none" stroke="#fff" strokeWidth="1.300" /></svg></AppButton>
    </Apps>
    <Tray>
      <TrayButton $w={24} aria-label="Скрытые значки"><svg width="12" height="7" viewBox="0 0 12 7" fill="none" stroke="#fff" strokeWidth="1.200"><path d="M.5 6.500L6 1l5.500 5.500" /></svg></TrayButton>
      <TrayButton $w={24} aria-label="Сеть"><svg width="17" height="14" viewBox="0 0 17 14" fill="none" stroke="#fff"><path d="M4 1.500h12.500v8H4M3.500 6v7M7 13.500h6M10 10v3" /><path d="M.5 1.500h4v4h-4z" /></svg></TrayButton>
      <TrayButton $w={24} aria-label="Громкость"><svg width="17" height="14" viewBox="0 0 17 14" fill="none" stroke="#fff"><path d="M.5 5v4h2.500l3.500 3V2L3 5zM9 5q1.500 2 0 4M11 3q3 4 0 8M13.500 1q4.500 6 0 12" /></svg></TrayButton>
      <TrayButton $w={36}>РУС</TrayButton>
      <TrayButton $w={66}><span>16:46<br />08.07.2025</span></TrayButton>
      <TrayButton $w={40} aria-label="Уведомления"><svg width="17" height="16" viewBox="0 0 17 16" fill="none" stroke="#fff" strokeWidth="1.200"><path d="M.6.600h15.800v11.400H11L8.500 14.500 6 12H.600z" /></svg></TrayButton>
      <ShowDesktop aria-label="Свернуть все окна" />
    </Tray>
  </Taskbar>
);

export default function App() {
  return (
    <Page>
      <Global />
      <BrowserChrome />
      <Main>
        <ParcelPanel />
        <MapView />
      </Main>
      <WinTaskbar />
    </Page>
  );
}
